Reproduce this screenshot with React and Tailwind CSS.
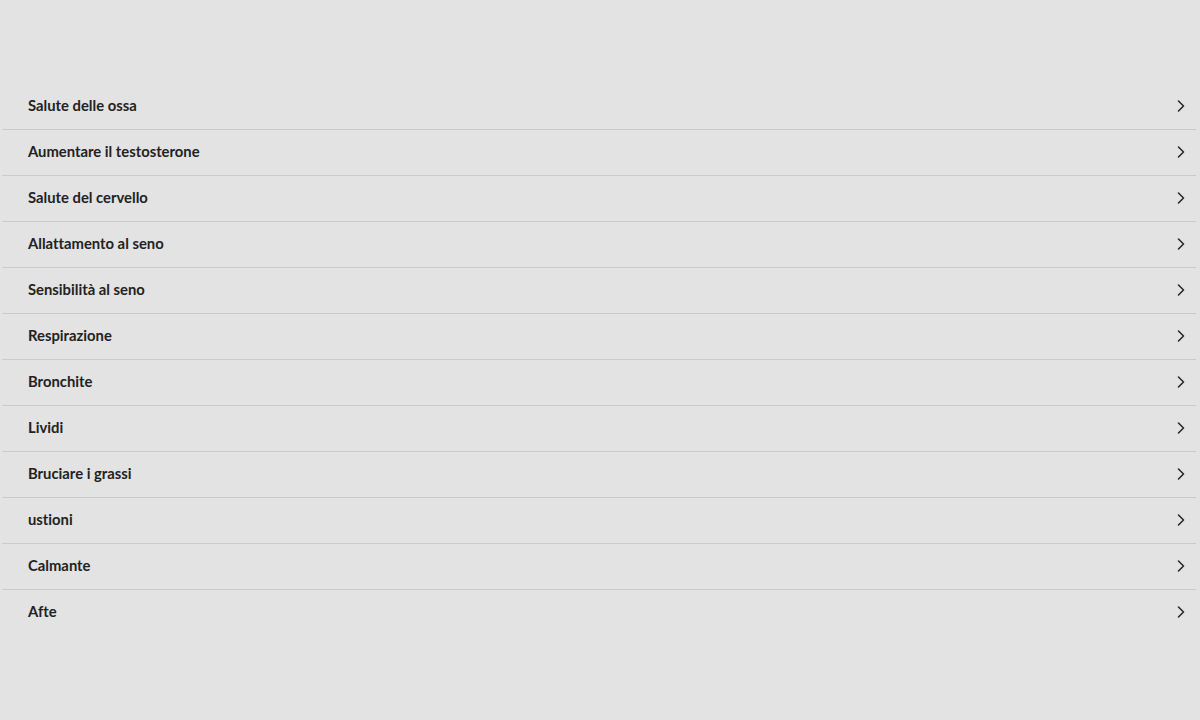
import React from 'react';

const items = [
  'Salute delle ossa',
  'Aumentare il testosterone',
  'Salute del cervello',
  'Allattamento al seno',
  'Sensibilità al seno',
  'Respirazione',
  'Bronchite',
  'Lividi',
  'Bruciare i grassi',
  'ustioni',
  'Calmante',
  'Afte',
];

const Chevron = () => (
  <svg width="8" height="12" viewBox="0 0 8 12" fill="none" className="text-[#2a2a2a]">
    <path d="M1.5 1 L6.5 6 L1.5 11" stroke="currentColor" strokeWidth="1.6" strokeLinecap="round" strokeLinejoin="round" />
  </svg>
);

export default function App() {
  return (
    <div
      className="min-h-[720px] bg-[#e3e3e3] pt-[84px] pl-[2px] pr-[4px]"
      style={{ fontFamily: 'Lato, "Open Sans", sans-serif', fontVariantLigatures: 'none' }}
    >
      <ul>
        {items.map((label, i) => (
          <li
            key={label}
            className={`flex h-[46px] items-center justify-between pl-[26px] pr-[11px] ${
              i < items.length - 1 ? 'border-b border-[#cacaca]' : ''
            }`}
          >
            <span className="text-[14.8px] leading-none font-bold text-[#222] pb-[3px]">{label}</span>
            <span className="pb-[2px]">
              <Chevron />
            </span>
          </li>
        ))}
      </ul>
    </div>
  );
}
